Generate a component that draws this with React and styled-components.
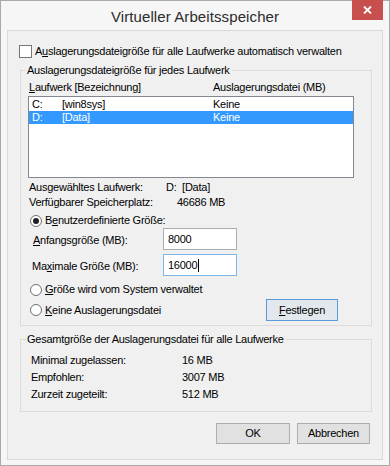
import React from 'react'
import styled, { createGlobalStyle } from 'styled-components'

const GlobalStyle = createGlobalStyle`
  html, body {
    margin: 0;
    padding: 0;
    background: #ffffff;
  }
  * {
    box-sizing: border-box;
  }
`

const drives = [
  { letter: 'C:', label: '[win8sys]', size: 'Keine', selected: false },
  { letter: 'D:', label: '[Data]', size: 'Keine', selected: true },
]

const totals = [
  { label: 'Minimal zugelassen:', value: '16 MB' },
  { label: 'Empfohlen:', value: '3007 MB' },
  { label: 'Zurzeit zugeteilt:', value: '512 MB' },
]

function App() {
  return (
    <>
      <GlobalStyle />
      <Window>
        <TitleBar>
          <span />
          <Title>Virtueller Arbeitsspeicher</Title>
          <CloseButton>
            <svg width="9" height="8" viewBox="0 0 9 8">
              <path d="M1 0.5 L8 7.5 M8 0.5 L1 7.5" stroke="#fff" strokeWidth="1.8" />
            </svg>
          </CloseButton>
        </TitleBar>

        <Panel>
          <CheckRow>
            <CheckBox />
            <span>A<u>u</u>slagerungsdateigröße für alle Laufwerke automatisch verwalten</span>
          </CheckRow>

          <Group $top={6}>
            <Legend>Auslagerungsdateigröße für jedes Laufwerk</Legend>
            <Inner $pt={4} $pb={4}>
              <ListHeader>
                <span><u>L</u>aufwerk [Bezeichnung]</span>
                <span>Auslagerungsdatei (MB)</span>
              </ListHeader>

              <ListBox>
                {drives.map((d) => (
                  <ListRow key={d.letter} $selected={d.selected}>
                    <span>{d.letter}</span>
                    <span>{d.label}</span>
                    <span>{d.size}</span>
                  </ListRow>
                ))}
              </ListBox>

              <InfoRow $mt={3} $valueX={137}>
                <span>Ausgewähltes Laufwerk:</span>
                <span>D:&nbsp;&nbsp;[Data]</span>
              </InfoRow>
              <InfoRow $mt={2} $valueX={148}>
                <span>Verfügbarer Speicherplatz:</span>
                <span>46686 MB</span>
              </InfoRow>

              <RadioRow $mt={5}>
                <Radio $checked />
                <span>B<u>e</u>nutzerdefinierte Größe:</span>
              </RadioRow>

              <FieldRow $mt={1}>
                <FieldLabel $x={5}><u>A</u>nfangsgröße (MB):</FieldLabel>
                <TextBox>8000</TextBox>
              </FieldRow>
              <FieldRow $mt={4}>
                <FieldLabel $x={4}>Ma<u>x</u>imale Größe (MB):</FieldLabel>
                <TextBox $focused>
                  16000<Caret />
                </TextBox>
              </FieldRow>

              <RadioRow $mt={7}>
                <Radio />
                <span><u>G</u>röße wird vom System verwaltet</span>
              </RadioRow>

              <ActionRow>
                <RadioRow>
                  <Radio />
                  <span><u>K</u>eine Auslagerungsdatei</span>
                </RadioRow>
                <Button $width={72} $accent><u>F</u>estlegen</Button>
              </ActionRow>
            </Inner>
          </Group>

          <Group $top={7}>
            <Legend>Gesamtgröße der Auslagerungsdatei für alle Laufwerke</Legend>
            <Inner $pt={8} $pb={10}>
              <TotalList>
                {totals.map((t) => (
                  <TotalRow key={t.label}>
                    <span>{t.label}</span>
                    <span>{t.value}</span>
                  </TotalRow>
                ))}
              </TotalList>
            </Inner>
          </Group>

          <Footer>
            <Button $width={74}>OK</Button>
            <Button $width={73}>Abbrechen</Button>
          </Footer>
        </Panel>
      </Window>
    </>
  )
}

const Window = styled.div`
  width: 390px;
  height: 466px;
  border: 1px solid #a9a9a9;
  background: #f6f6f6;
  display: flex;
  flex-direction: column;
  padding: 0 6px 5px 6px;
  font-family: 'Liberation Sans', Arial, sans-serif;
  font-size: 11px;
  letter-spacing: -0.25px;
  color: #000;
`

const TitleBar = styled.div`
  height: 29px;
  display: grid;
  grid-template-columns: 31px 1fr 31px;
  align-items: start;
`

const Title = styled.div`
  text-align: center;
  font-size: 15px;
  line-height: 18px;
  padding-top: 7px;
  color: #2b2b2b;
  letter-spacing: 0.1px;
`

const CloseButton = styled.div`
  height: 20px;
  margin-top: -1px;
  background: #c7504f;
  display: flex;
  align-items: center;
  justify-content: center;
`

const Panel = styled.div`
  flex: 1;
  border: 1px solid #d9d9d9;
  background: #f0f0f0;
  padding: 14px 11px 0 11px;
  display: flex;
  flex-direction: column;
`

const CheckRow = styled.div`
  display: flex;
  align-items: center;
  gap: 3px;
  height: 13px;
  line-height: 13px;
`

const CheckBox = styled.div`
  width: 13px;
  height: 13px;
  border: 1px solid #767676;
  background: #fff;
`

const Group = styled.fieldset`
  margin: ${(p) => p.$top}px 0 0 1px;
  padding: 0;
  border: 1px solid #dcdcdc;
  width: 352px;
  min-width: 0;
`

const Legend = styled.legend`
  margin-left: 5px;
  padding: 0 2px 0 1px;
  line-height: 13px;
`

const Inner = styled.div`
  padding: ${(p) => p.$pt}px 17px ${(p) => p.$pb}px 7px;
  display: flex;
  flex-direction: column;
`

const ListHeader = styled.div`
  display: grid;
  grid-template-columns: 184px 1fr;
  padding-left: 1px;
  line-height: 13px;
  height: 13px;
`

const ListBox = styled.div`
  margin-top: 2px;
  height: 82px;
  border: 1px solid #828790;
  background: #fff;
  padding: 1px 0 0 0;
`

const ListRow = styled.div`
  display: grid;
  grid-template-columns: 30px 151px 1fr;
  padding-left: 3px;
  height: 13px;
  line-height: 13px;
  background: ${(p) => (p.$selected ? '#3399ff' : 'transparent')};
  color: ${(p) => (p.$selected ? '#fff' : '#000')};
`

const InfoRow = styled.div`
  margin-top: ${(p) => p.$mt}px;
  display: grid;
  grid-template-columns: ${(p) => p.$valueX}px 1fr;
  padding-left: 1px;
  height: 13px;
  line-height: 13px;
`

const RadioRow = styled.div`
  margin-top: ${(p) => p.$mt || 0}px;
  display: flex;
  align-items: center;
  gap: 3px;
  padding-left: 2px;
  height: 13px;
  line-height: 13px;
`

const Radio = styled.div`
  width: 12px;
  height: 12px;
  border-radius: 50%;
  border: 1px solid #707070;
  background: #fff;
  display: flex;
  align-items: center;
  justify-content: center;

  &::after {
    content: '';
    display: ${(p) => (p.$checked ? 'block' : 'none')};
    width: 6px;
    height: 6px;
    border-radius: 50%;
    background: #1f1f1f;
  }
`

const FieldRow = styled.div`
  margin-top: ${(p) => p.$mt}px;
  display: grid;
  grid-template-columns: 135px 74px;
  align-items: center;
  height: 22px;
`

const FieldLabel = styled.span`
  padding-left: ${(p) => p.$x}px;
  padding-top: 1px;
`

const TextBox = styled.div`
  height: 22px;
  border: 1px solid ${(p) => (p.$focused ? '#7eb4ea' : '#abadb3')};
  background: #fff;
  padding-left: 4px;
  display: flex;
  align-items: center;
`

const Caret = styled.span`
  display: inline-block;
  width: 1px;
  height: 13px;
  background: #000;
  margin-left: 1px;
`

const ActionRow = styled.div`
  margin-top: 3px;
  display: flex;
  align-items: center;
  justify-content: space-between;
  padding-right: 16px;
  height: 22px;
`

const Button = styled.div`
  width: ${(p) => p.$width}px;
  height: 22px;
  border: 1px solid ${(p) => (p.$accent ? '#5a9bdc' : '#adadad')};
  background: ${(p) => (p.$accent ? '#e3e8ee' : '#e1e1e1')};
  display: flex;
  align-items: center;
  justify-content: center;
  line-height: 13px;
`

const TotalList = styled.div`
  display: flex;
  flex-direction: column;
  gap: 4px;
`

const TotalRow = styled.div`
  display: grid;
  grid-template-columns: 151px 1fr;
  padding-left: 3px;
  height: 13px;
  line-height: 13px;
`

const Footer = styled.div`
  margin-top: 11px;
  display: flex;
  justify-content: flex-end;
  gap: 7px;
  padding-right: 1px;

  & > div {
    height: 21px;
  }
`

export default App
